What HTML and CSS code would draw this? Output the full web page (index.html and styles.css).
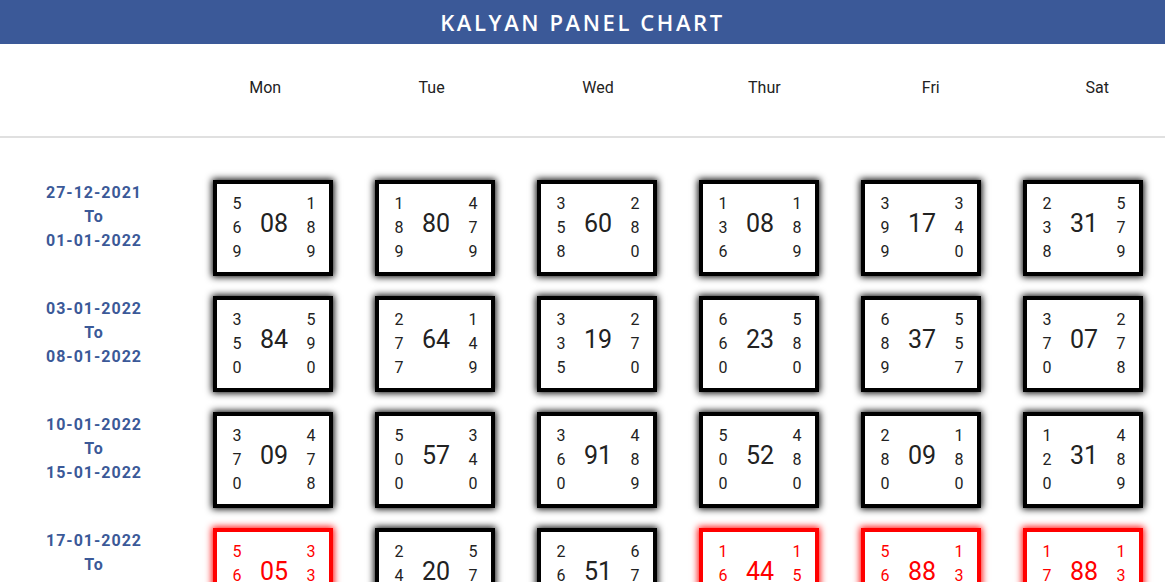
FILE: index.html
```html
<!DOCTYPE html>
<html>
<head>
<meta charset="utf-8">
<title>Kalyan Panel Chart</title>
<link rel="stylesheet" href="styles.css">
</head>
<body>
<header class="topbar"><h1 class="title">KALYAN PANEL CHART</h1></header>
<div class="days">
  <div class="day-blank"></div>
  <div class="day">Mon</div>
  <div class="day">Tue</div>
  <div class="day">Wed</div>
  <div class="day">Thur</div>
  <div class="day">Fri</div>
  <div class="day">Sat</div>
</div>
<div class="chart">
  <div class="row">
    <div class="date">27-12-2021<br>To<br>01-01-2022</div>
    <div class="cell"><div class="panel"><div class="side"><span>5</span><span>6</span><span>9</span></div><div class="jodi">08</div><div class="side"><span>1</span><span>8</span><span>9</span></div></div></div>
    <div class="cell"><div class="panel"><div class="side"><span>1</span><span>8</span><span>9</span></div><div class="jodi">80</div><div class="side"><span>4</span><span>7</span><span>9</span></div></div></div>
    <div class="cell"><div class="panel"><div class="side"><span>3</span><span>5</span><span>8</span></div><div class="jodi">60</div><div class="side"><span>2</span><span>8</span><span>0</span></div></div></div>
    <div class="cell"><div class="panel"><div class="side"><span>1</span><span>3</span><span>6</span></div><div class="jodi">08</div><div class="side"><span>1</span><span>8</span><span>9</span></div></div></div>
    <div class="cell"><div class="panel"><div class="side"><span>3</span><span>9</span><span>9</span></div><div class="jodi">17</div><div class="side"><span>3</span><span>4</span><span>0</span></div></div></div>
    <div class="cell"><div class="panel"><div class="side"><span>2</span><span>3</span><span>8</span></div><div class="jodi">31</div><div class="side"><span>5</span><span>7</span><span>9</span></div></div></div>
  </div>
  <div class="row">
    <div class="date">03-01-2022<br>To<br>08-01-2022</div>
    <div class="cell"><div class="panel"><div class="side"><span>3</span><span>5</span><span>0</span></div><div class="jodi">84</div><div class="side"><span>5</span><span>9</span><span>0</span></div></div></div>
    <div class="cell"><div class="panel"><div class="side"><span>2</span><span>7</span><span>7</span></div><div class="jodi">64</div><div class="side"><span>1</span><span>4</span><span>9</span></div></div></div>
    <div class="cell"><div class="panel"><div class="side"><span>3</span><span>3</span><span>5</span></div><div class="jodi">19</div><div class="side"><span>2</span><span>7</span><span>0</span></div></div></div>
    <div class="cell"><div class="panel"><div class="side"><span>6</span><span>6</span><span>0</span></div><div class="jodi">23</div><div class="side"><span>5</span><span>8</span><span>0</span></div></div></div>
    <div class="cell"><div class="panel"><div class="side"><span>6</span><span>8</span><span>9</span></div><div class="jodi">37</div><div class="side"><span>5</span><span>5</span><span>7</span></div></div></div>
    <div class="cell"><div class="panel"><div class="side"><span>3</span><span>7</span><span>0</span></div><div class="jodi">07</div><div class="side"><span>2</span><span>7</span><span>8</span></div></div></div>
  </div>
  <div class="row">
    <div class="date">10-01-2022<br>To<br>15-01-2022</div>
    <div class="cell"><div class="panel"><div class="side"><span>3</span><span>7</span><span>0</span></div><div class="jodi">09</div><div class="side"><span>4</span><span>7</span><span>8</span></div></div></div>
    <div class="cell"><div class="panel"><div class="side"><span>5</span><span>0</span><span>0</span></div><div class="jodi">57</div><div class="side"><span>3</span><span>4</span><span>0</span></div></div></div>
    <div class="cell"><div class="panel"><div class="side"><span>3</span><span>6</span><span>0</span></div><div class="jodi">91</div><div class="side"><span>4</span><span>8</span><span>9</span></div></div></div>
    <div class="cell"><div class="panel"><div class="side"><span>5</span><span>0</span><span>0</span></div><div class="jodi">52</div><div class="side"><span>4</span><span>8</span><span>0</span></div></div></div>
    <div class="cell"><div class="panel"><div class="side"><span>2</span><span>8</span><span>0</span></div><div class="jodi">09</div><div class="side"><span>1</span><span>8</span><span>0</span></div></div></div>
    <div class="cell"><div class="panel"><div class="side"><span>1</span><span>2</span><span>0</span></div><div class="jodi">31</div><div class="side"><span>4</span><span>8</span><span>9</span></div></div></div>
  </div>
  <div class="row">
    <div class="date">17-01-2022<br>To<br>22-01-2022</div>
    <div class="cell"><div class="panel red"><div class="side"><span>5</span><span>6</span><span>9</span></div><div class="jodi">05</div><div class="side"><span>3</span><span>3</span><span>9</span></div></div></div>
    <div class="cell"><div class="panel"><div class="side"><span>2</span><span>4</span><span>6</span></div><div class="jodi">20</div><div class="side"><span>5</span><span>7</span><span>8</span></div></div></div>
    <div class="cell"><div class="panel"><div class="side"><span>2</span><span>6</span><span>7</span></div><div class="jodi">51</div><div class="side"><span>6</span><span>7</span><span>8</span></div></div></div>
    <div class="cell"><div class="panel red"><div class="side"><span>1</span><span>6</span><span>7</span></div><div class="jodi">44</div><div class="side"><span>1</span><span>5</span><span>8</span></div></div></div>
    <div class="cell"><div class="panel red"><div class="side"><span>5</span><span>6</span><span>7</span></div><div class="jodi">88</div><div class="side"><span>1</span><span>3</span><span>4</span></div></div></div>
    <div class="cell"><div class="panel red"><div class="side"><span>1</span><span>7</span><span>0</span></div><div class="jodi">88</div><div class="side"><span>1</span><span>3</span><span>4</span></div></div></div>
  </div>
</div>
</body>
</html>
```
FILE: styles.css
```css
html, body {
  margin: 0;
  padding: 0;
  overflow: hidden;
  background: #fff;
}
body {
  font-family: Roboto, "Liberation Sans", sans-serif;
  color: #222;
  width: 1165px;
}
.topbar {
  background: #3b5998;
  height: 44px;
  display: flex;
  align-items: center;
  justify-content: center;
}
.title {
  margin: 0;
  color: #fff;
  font-family: "Open Sans", "Noto Sans", sans-serif;
  font-weight: 600;
  font-size: 22px;
  letter-spacing: 2.6px;
  line-height: 1;
}
.days {
  display: grid;
  grid-template-columns: 182px repeat(6, 166.4px);
  align-items: center;
  border-bottom: 2px solid #e0e0e0;
  width: 1180px;
  padding-bottom: 6px;
  box-sizing: border-box;
  height: 94px;
}
.day {
  text-align: center;
  font-size: 16px;
  color: #222;
}
.chart {
  padding-top: 42px;
  display: flex;
  flex-direction: column;
  gap: 20px;
}
.row {
  display: grid;
  grid-template-columns: 192px repeat(6, 162px);
  align-items: start;
}
.date {
  text-align: center;
  padding: 1px 4px 0 0;
  color: #3b5998;
  font-family: Roboto, "Liberation Sans", sans-serif;
  font-weight: 700;
  font-size: 16px;
  line-height: 24px;
  letter-spacing: 1px;
}
.cell {
  display: flex;
  justify-content: center;
}
.panel {
  width: 120px;
  height: 96px;
  box-sizing: border-box;
  border: 4px solid #000;
  box-shadow: 0 0 7px 1px #000;
  background: #fff;
  display: flex;
  align-items: center;
  justify-content: space-between;
  padding: 0 13px 0 15px;
  color: #222;
}
.panel.red {
  border-color: #f00;
  box-shadow: 0 0 7px 1px #f00;
  color: #f00;
}
.side {
  display: flex;
  flex-direction: column;
  align-items: center;
  width: 10px;
  font-size: 16px;
  line-height: 24px;
}
.jodi {
  font-size: 25px;
  line-height: 1;
  padding-bottom: 10px;
}
```
